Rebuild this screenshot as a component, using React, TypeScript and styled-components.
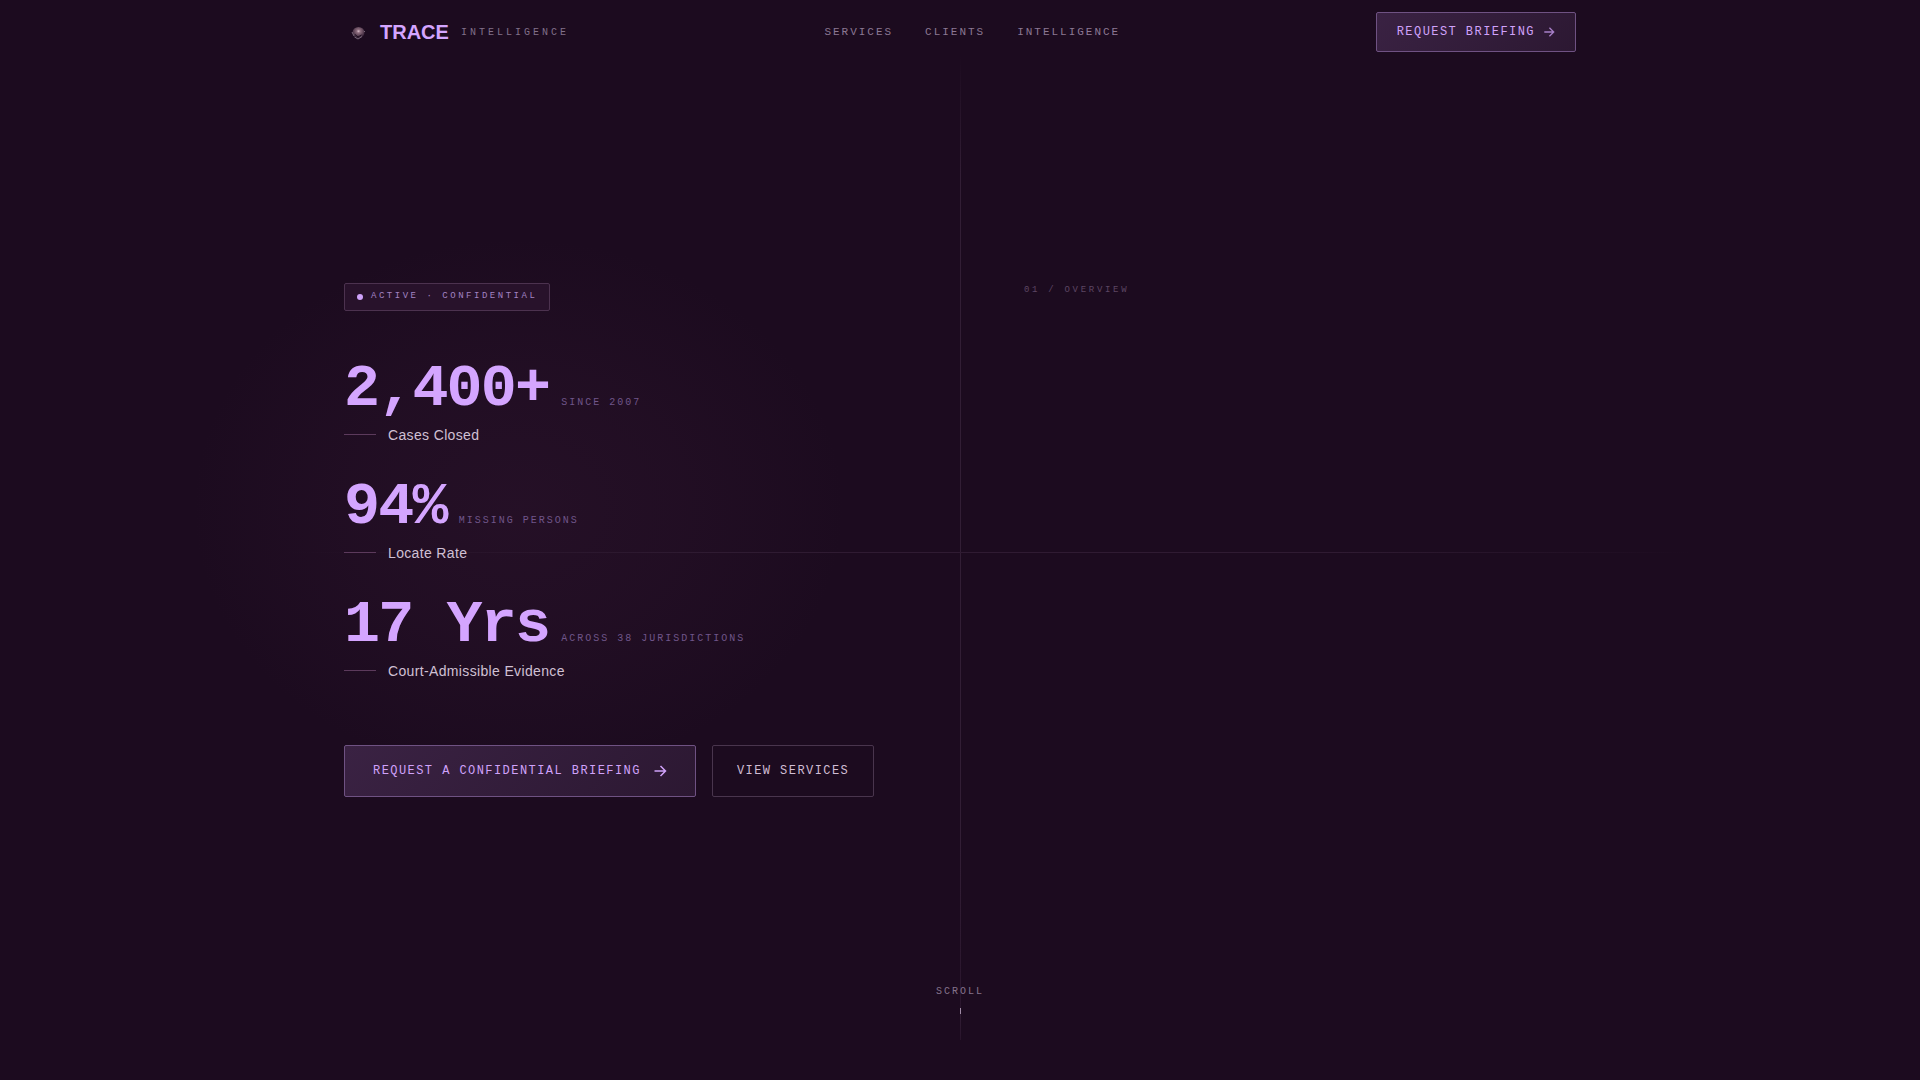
import React from "react";
import styled, { createGlobalStyle } from "styled-components";

const mono = `"Liberation Mono", "Courier New", monospace`;
const sans = `"Liberation Sans", Arial, sans-serif`;

const GlobalStyle = createGlobalStyle`
  *, *::before, *::after { box-sizing: border-box; }
  body { margin: 0; background: #1c0b1f; color: #d2bfd6; font-family: ${sans}; }
  h1, p, ul { margin: 0; padding: 0; }
  a { color: inherit; text-decoration: none; }
`;

const Page = styled.div`
  position: relative;
  min-height: 100vh;
  display: flex;
  flex-direction: column;
`;

const Header = styled.header`
  position: absolute;
  inset: 0 0 auto 0;
  z-index: 2;
`;

const Bar = styled.div`
  max-width: 1280px;
  height: 64px;
  margin: 0 auto;
  padding: 0 24px;
  display: flex;
  align-items: center;
  justify-content: space-between;
`;

const Brand = styled.a`
  display: flex;
  align-items: center;
  gap: 8px;
`;

const BrandName = styled.span`
  font-size: 20px;
  line-height: 28px;
  font-weight: 700;
  color: #d4a5ff;
`;

const BrandTag = styled.span`
  margin-left: 4px;
  padding-top: 2px;
  font-family: ${mono};
  font-size: 10px;
  line-height: 16px;
  letter-spacing: 0.3em;
  color: #81708a;
`;

const Nav = styled.nav`
  display: flex;
  gap: 32px;
`;

const NavLink = styled.a`
  font-family: ${mono};
  font-size: 11px;
  line-height: 16px;
  letter-spacing: 0.18em;
  color: #8b7893;
`;

const Button = styled.button<{ $variant?: "solid" | "outline"; $size?: "sm" | "lg" }>`
  display: inline-flex;
  align-items: center;
  justify-content: center;
  gap: ${(p) => (p.$size === "sm" ? "8px" : "12px")};
  height: ${(p) => (p.$size === "sm" ? "40px" : "52px")};
  padding: 0 ${(p) => (p.$variant === "outline" ? "24px" : p.$size === "sm" ? "20px" : "28px")};
  border: 1px solid ${(p) => (p.$variant === "outline" ? "#49354d" : "#6f5283")};
  border-radius: 2px;
  background: ${(p) =>
    p.$variant === "outline" ? "transparent" : "linear-gradient(135deg, #3a2243, #2c1832)"};
  color: ${(p) => (p.$variant === "outline" ? "#d0bdd4" : "#d0a2fa")};
  font-family: ${mono};
  font-size: 12px;
  line-height: 16px;
  letter-spacing: 0.12em;
  cursor: pointer;

  svg {
    opacity: ${(p) => (p.$size === "sm" ? 0.75 : 1)};
  }
`;

const Hero = styled.main`
  position: relative;
  flex: 1;
  display: flex;
  align-items: center;
  overflow: hidden;
`;

const Glow = styled.div`
  position: absolute;
  left: 10%;
  top: 22%;
  width: 34%;
  height: 50%;
  background: radial-gradient(closest-side, rgba(80, 40, 74, 0.17), rgba(80, 40, 74, 0.1) 50%, rgba(80, 40, 74, 0));
`;

const VerticalRule = styled.div`
  position: absolute;
  left: 50%;
  top: 56px;
  bottom: 40px;
  width: 1px;
  background: linear-gradient(to bottom, transparent, #321e35 12%, #321e35 80%, #28142b);
`;

const HorizontalRule = styled.div`
  position: absolute;
  top: 552px;
  left: 15%;
  right: 12%;
  height: 1px;
  background: linear-gradient(to right, transparent, #2f1b32 30%, #2f1b32 75%, transparent);
`;

const Columns = styled.div`
  position: relative;
  width: 100%;
  max-width: 1280px;
  margin: 0 auto;
  padding: 0 24px;
  display: grid;
  grid-template-columns: 1fr 1fr;
`;

const Lead = styled.section`
  display: flex;
  flex-direction: column;
  align-items: flex-start;
`;

const Overview = styled.section`
  padding-left: 64px;
`;

const OverviewLabel = styled.p`
  font-family: ${mono};
  font-size: 9px;
  line-height: 14px;
  letter-spacing: 0.3em;
  color: #5c4663;
`;

const Badge = styled.div`
  display: inline-flex;
  align-items: center;
  gap: 8px;
  height: 28px;
  padding: 0 12px;
  border: 1px solid #4c324f;
  border-radius: 2px;
  background: #28122b;
  font-family: ${mono};
  font-size: 9px;
  line-height: 14px;
  letter-spacing: 0.28em;
  color: #a283c2;
`;

const BadgeText = styled.span`
  padding-bottom: 3px;
`;

const Dot = styled.span`
  width: 6px;
  height: 6px;
  border-radius: 50%;
  background: #cfa2fa;
`;

const Stats = styled.ul`
  margin: 48px 0 64px;
  list-style: none;
  display: flex;
  flex-direction: column;
  gap: 32px;
`;

const Stat = styled.li`
  display: flex;
  flex-direction: column;
  gap: 6px;
`;

const StatFigure = styled.div`
  display: flex;
  align-items: baseline;
  gap: 12px;
  height: 60px;
`;

const StatValue = styled.span`
  font-family: ${mono};
  font-size: 60px;
  line-height: 60px;
  font-weight: 700;
  letter-spacing: -0.03em;
  color: #d4a5ff;
`;

const StatNote = styled.span`
  font-family: ${mono};
  font-size: 10px;
  line-height: 16px;
  letter-spacing: 0.2em;
  color: #70568a;
`;

const StatLabel = styled.div`
  display: flex;
  align-items: center;
  gap: 12px;
  font-size: 14px;
  line-height: 20px;
  letter-spacing: 0.025em;
  color: #d0c0d4;

  &::before {
    content: "";
    width: 32px;
    height: 1px;
    margin-bottom: 2px;
    background: #5c3a5c;
  }
`;

const Actions = styled.div`
  display: flex;
  gap: 16px;
`;

const ScrollCue = styled.div`
  position: absolute;
  left: 0;
  right: 0;
  bottom: 40px;
  display: flex;
  flex-direction: column;
  align-items: center;
  gap: 8px;
  font-family: ${mono};
  font-size: 10px;
  line-height: 16px;
  letter-spacing: 0.2em;
  color: #85738c;
`;

const ScrollTrack = styled.span`
  width: 1px;
  height: 32px;
  background: linear-gradient(to bottom, #a08ba6 6px, #321e35 6px, #28142b);
`;

function Arrow({ size }: { size: number }) {
  return (
    <svg width={size} height={size} viewBox="0 0 14 14" fill="none" stroke="currentColor" strokeWidth="1.5" aria-hidden="true">
      <path d="M1.5 7h11M7.5 2l5 5-5 5" />
    </svg>
  );
}

function Mark() {
  return (
    <svg width="28" height="28" viewBox="0 0 28 28" aria-hidden="true">
      <defs>
        <radialGradient id="orb" cx="0.5" cy="0.38" r="0.62">
          <stop offset="0" stopColor="#d9bfcb" />
          <stop offset="0.25" stopColor="#8d6d7e" />
          <stop offset="0.65" stopColor="#5a4154" />
          <stop offset="1" stopColor="#2a172c" />
        </radialGradient>
      </defs>
      <ellipse cx="14.5" cy="14.5" rx="6" ry="5.5" fill="url(#orb)" />
      <path d="M8 14l2 4M10.5 19l3.5 2 4-2.5M20 13l1 1" stroke="#786779" strokeWidth="1" fill="none" />
      <path d="M11 16.5l3 2.5 3.5-2" stroke="#1d0e20" strokeWidth="1" fill="none" />
    </svg>
  );
}

const stats = [
  { value: "2,400+", note: "SINCE 2007", label: "Cases Closed" },
  { value: "94%", note: "MISSING PERSONS", label: "Locate Rate" },
  { value: "17 Yrs", note: "ACROSS 38 JURISDICTIONS", label: "Court-Admissible Evidence" },
];

export default function App() {
  return (
    <Page>
      <GlobalStyle />
      <Header>
        <Bar>
          <Brand href="#top">
            <Mark />
            <BrandName>TRACE</BrandName>
            <BrandTag>INTELLIGENCE</BrandTag>
          </Brand>
          <Nav>
            <NavLink href="#services">SERVICES</NavLink>
            <NavLink href="#clients">CLIENTS</NavLink>
            <NavLink href="#intelligence">INTELLIGENCE</NavLink>
          </Nav>
          <Button $size="sm">
            REQUEST BRIEFING
            <Arrow size={12} />
          </Button>
        </Bar>
      </Header>
      <Hero id="top">
        <Glow />
        <VerticalRule />
        <HorizontalRule />
        <Columns>
          <Lead>
            <Badge>
              <Dot />
              <BadgeText>ACTIVE · CONFIDENTIAL</BadgeText>
            </Badge>
            <Stats>
              {stats.map((s) => (
                <Stat key={s.label}>
                  <StatFigure>
                    <StatValue>{s.value}</StatValue>
                    <StatNote>{s.note}</StatNote>
                  </StatFigure>
                  <StatLabel>{s.label}</StatLabel>
                </Stat>
              ))}
            </Stats>
            <Actions>
              <Button>
                REQUEST A CONFIDENTIAL BRIEFING
                <Arrow size={14} />
              </Button>
              <Button $variant="outline">VIEW SERVICES</Button>
            </Actions>
          </Lead>
          <Overview>
            <OverviewLabel>01 / OVERVIEW</OverviewLabel>
          </Overview>
        </Columns>
        <ScrollCue>
          SCROLL
          <ScrollTrack />
        </ScrollCue>
      </Hero>
    </Page>
  );
}
